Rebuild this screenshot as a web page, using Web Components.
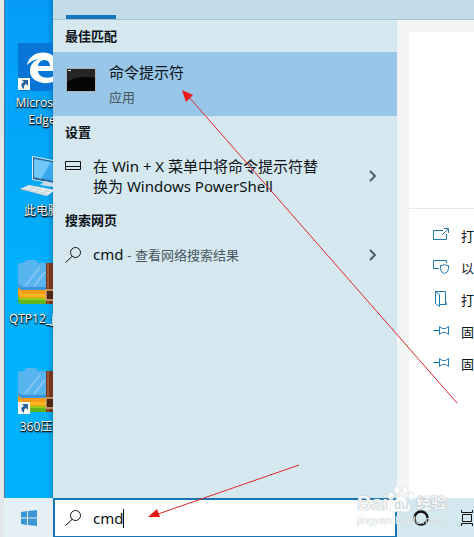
<!DOCTYPE html>
<html lang="zh-CN">
<head>
    <meta charset="UTF-8">
    <meta name="viewport" content="width=device-width, initial-scale=1">
    <title>cmd</title>
    <style>
        body {
            margin: 0;
            font-family: "Noto Sans", "Noto Sans CJK SC", sans-serif;
            font-size: 15px;
            color: #0b1116;
        }
    </style>
</head>
<body>

<!-- Whole screen: desktop on the left, search flyout, taskbar below -->
<template id="search-screen">
    <style>
        :host {
            display: grid;
            box-sizing: border-box;
            position: relative;
            height: 100vh;
            overflow: hidden;
            grid-template-columns: 49px minmax(0, 1fr);
            grid-template-rows: minmax(0, 1fr) 39px;
            border-left: 4px solid #e4e7ea;
            background: #d5e8f0;
        }

        .desktop {
            display: grid;
            grid-auto-rows: 108px;
            grid-template-columns: 74px;
            box-sizing: border-box;
            overflow: hidden;
            padding-top: 43px;
            background: linear-gradient(90deg, transparent 42px, #00558855), linear-gradient(#069cf8, #00b2fc 60%);
            border-left: 1px solid #56788c;
        }

        .flyout {
            display: grid;
            grid-template-columns: minmax(0, 1fr) 77px;
            grid-template-rows: 20px minmax(0, 1fr);
        }

        .tabs {
            grid-column: 1 / 3;
            display: flex;
            align-items: flex-end;
            padding-left: 13px;
            background: #c3dce9;
            border-bottom: 1px solid #a9c2cf;
        }

        .tabs span {
            width: 50px;
            height: 4px;
            background: #1577bd;
        }

        .results {
            background: #d5e8f0;
        }

        .details {
            overflow: hidden;
            display: flex;
            flex-direction: column;
            padding: 12px 0 0 12px;
            background: #f3f4f4;
        }

        .card {
            height: 176px;
            background: #fff;
            border-bottom: 1px solid #e9e9e9;
        }

        .actions {
            flex: 1;
            padding-top: 12px;
            background: #fff;
        }

        .taskbar {
            grid-column: 1 / 3;
        }

        .marks {
            position: absolute;
            left: -4px;
            top: 0;
            width: 474px;
            height: 537px;
            pointer-events: none;
        }

        baidu-mark {
            position: absolute;
            right: 23px;
            bottom: 10px;
        }
    </style>
    <div class="desktop"><slot name="desktop"></slot></div>
    <div class="flyout">
        <div class="tabs"><span></span></div>
        <div class="results"><slot></slot></div>
        <div class="details">
            <div class="card"></div>
            <div class="actions"><slot name="actions"></slot></div>
        </div>
    </div>
    <div class="taskbar"><slot name="taskbar"></slot></div>
    <baidu-mark></baidu-mark>
    <svg class="marks" viewBox="0 0 474 537" aria-hidden="true">
        <g stroke="#e0262c" fill="#ee1717">
            <path d="M457 403 188 96M299 465 158 514"/>
            <path stroke="none" d="M182 90l11 5-7 7zM148 517l9-8 3 8z"/>
        </g>
    </svg>
</template>

<template id="desktop-icon">
    <style>
        :host {
            display: block;
            text-align: center;
            font-family: "Open Sans", "Noto Sans CJK SC", sans-serif;
            font-size: 12px;
            line-height: 17px;
            color: #fff;
            text-shadow: 1px 1px 2px #000, 0 1px 1px #000;
        }

        svg {
            display: block;
            width: 48px;
            height: 48px;
            margin: 0 auto 3px;
        }
    </style>
    <svg viewBox="0 0 48 48" aria-hidden="true"></svg>
    <slot></slot>
</template>

<template id="result-group">
    <style>
        :host {
            display: block;
        }

        h2 {
            margin: 0;
            padding: 0 12px;
            font-size: 13px;
            line-height: 32px;
            font-weight: 700;
        }
    </style>
    <h2></h2>
    <slot></slot>
</template>

<template id="result-row">
    <style>
        :host {
            display: block;
        }

        button {
            display: flex;
            width: 100%;
            box-sizing: border-box;
            align-items: center;
            gap: 12px;
            padding: 8px 16px 8px 12px;
            border: 0;
            background: none;
            color: inherit;
            font: inherit;
            line-height: 20px;
            text-align: left;
        }

        :host([selected]) button {
            height: 64px;
            padding: 8px 12px;
            line-height: 24px;
            background: #97c6e8;
        }

        svg {
            flex: none;
            width: 16px;
            height: 16px;
            fill: none;
            stroke: #111;
        }

        :host([icon="keys"]) .icon {
            align-self: flex-start;
        }

        :host([selected]) .icon {
            align-self: flex-start;
            width: 32px;
            height: 24px;
            margin-top: 8px;
        }

        .text {
            flex: 1;
        }

        .chevron {
            stroke: #4b5f69;
            stroke-width: 2;
        }

        :host([selected]) .chevron {
            display: none;
        }

        ::slotted(small) {
            font-size: 13px;
            color: #48565e;
        }
    </style>
    <button type="button">
        <svg class="icon" aria-hidden="true"></svg>
        <span class="text"><slot></slot></span>
        <svg class="chevron" viewBox="0 0 16 16" aria-hidden="true"><path d="M5 3l5 5-5 5"/></svg>
    </button>
</template>

<template id="app-action">
    <style>
        :host {
            display: block;
        }

        button {
            display: flex;
            align-items: center;
            gap: 12px;
            height: 32px;
            padding: 0 0 4px 24px;
            border: 0;
            background: none;
            color: inherit;
            font: inherit;
            font-size: 13px;
            white-space: nowrap;
        }

        svg {
            flex: none;
            width: 16px;
            height: 16px;
            fill: none;
            stroke: #2079b2;
        }
    </style>
    <button type="button">
        <svg viewBox="0 0 16 16" aria-hidden="true"></svg>
        <slot></slot>
    </button>
</template>

<template id="task-bar">
    <style>
        :host {
            display: grid;
            grid-template-columns: 49px minmax(0, 1fr) 77px;
            height: 39px;
            background: #d3e8ef;
        }

        button {
            display: grid;
            place-items: center;
            padding: 0;
            border: 0;
            background: none;
        }

        .start {
            background: #e5f0f6;
        }

        .search {
            display: flex;
            align-items: center;
            box-sizing: border-box;
            padding-left: 10px;
            border: 2px solid #1873b4;
            border-bottom-width: 1px;
            background: #fff;
        }

        .search svg {
            margin-right: 12px;
        }

        input {
            field-sizing: content;
            padding: 0;
            border: 0;
            outline: 0;
            background: none;
            color: inherit;
            font: inherit;
        }

        .caret {
            width: 1px;
            height: 19px;
            background: #000;
        }

        .tray {
            display: grid;
            grid-template-columns: 48px 44px;
            overflow: hidden;
        }

        svg {
            fill: none;
            stroke: #111;
        }
    </style>
    <button class="start" type="button" aria-label="开始">
        <svg width="16" height="16" viewBox="0 0 16 16">
            <path fill="#3c96d6" stroke="none" d="M0 2l6-1v6.500H0zM7 1l9-1v7.500H7zM0 8.500h6V15l-6-1zM7 8.500h9V16l-9-1z"/>
        </svg>
    </button>
    <label class="search">
        <svg width="16" height="16" viewBox="0 0 16 16" aria-hidden="true">
            <circle cx="10.500" cy="5.500" r="5"/><path d="M7 9.500L.5 15.500"/>
        </svg>
        <input type="text" value="cmd" aria-label="搜索">
        <span class="caret"></span>
    </label>
    <div class="tray">
        <button type="button" aria-label="Cortana">
            <svg width="16" height="16" viewBox="0 0 16 16"><circle cx="8" cy="8" r="6.500" stroke-width="2.500"/></svg>
        </button>
        <button type="button" aria-label="任务视图">
            <svg width="12" height="16" viewBox="0 0 12 16"><path d="M.5 0v2.500h11V0M1.500 4.500h9v7h-9zM.5 16v-2.500h11V16"/></svg>
        </button>
    </div>
</template>

<!-- Paw logo watermark -->
<template id="baidu-mark">
    <style>
        :host {
            display: block;
            width: 94px;
            color: #ffffffe6;
            font-family: "Liberation Sans", "Noto Sans CJK SC", sans-serif;
            text-shadow: 0 0 1px #9aa5ab, 0 0 1px #b5bfc5;
            pointer-events: none;
        }

        .name {
            display: flex;
            align-items: center;
            font-size: 20px;
            line-height: 18px;
            font-weight: 700;
        }

        .name b:last-child {
            font-size: 15px;
        }

        svg {
            width: 28px;
            height: 28px;
            margin: -8px 1px 0 -1px;
            fill: #fffffff0;
            stroke: #c5ced3;
            stroke-width: .5;
        }

        text {
            font-size: 12px;
            fill: #d3dde2;
            stroke: none;
            text-shadow: none;
        }

        .site {
            font-size: 11px;
            line-height: 14px;
            color: #ffffffb0;
            text-shadow: 0 0 1px #b5bfc5;
        }
    </style>
    <div class="name">
        <b>Bai</b>
        <svg viewBox="0 0 28 28">
            <ellipse cx="4" cy="11" rx="3" ry="4"/>
            <ellipse cx="10" cy="5" rx="3" ry="4"/>
            <ellipse cx="18" cy="5" rx="3" ry="4"/>
            <ellipse cx="24" cy="11" rx="3" ry="4"/>
            <path d="M14 11c4 0 6 5 8 8 3 4 1 8-3 8-3 0-7-1-10 0-5 1-8-3-4-8 3-3 5-8 9-8z"/>
            <text x="7" y="24">du</text>
        </svg>
        <b>经验</b>
    </div>
    <div class="site">jingyan.baidu.com</div>
</template>

<script>
    // Little arrow badge shared by the desktop shortcuts
    const shortcut = `<path fill="#fff" d="M0 35h12v12H0z"/>
        <path fill="#285f9f" d="M4 37h6v6l-2-2c-2 1-2 2-2 5-4-3-3-6 0-7z"/>`;

    const archive = `
        <path fill="#62b51f" d="M0 35h48v6q0 4-4 4H4q-4 0-4-4z"/>
        <path fill="#94ce17" d="M0 38h30v3H2z"/>
        <path fill="#f59b13" d="M0 27h48v12H4q-4 0-4-4z"/>
        <path fill="#ffb820" d="M0 32l5 3h25v3H4z"/>
        <path fill="#58b4ef" d="M0 6q0-2 2-2h4l2-3h10l2 3h28v24q0 3-4 3H4q-4-1-4-5z"/>
        <path fill="#3b96df" d="M0 25l4 3h42v3H4q-4-1-4-5z"/>
        <path stroke="#83c6f3" stroke-width="2" d="M22 8L7 27M27 13L16 27"/>
        <path fill="#71351e" d="M28 4h12v41H28z"/>
        <path fill="#9c5530" d="M29 4h2v41h-2z"/>
        <path fill="#4e2517" stroke="#d9aa73" stroke-width="1.500" d="M28 31h10v10H28z"/>`;

    const desktopIcons = {
        edge: `<path fill="#0876d7" d="M0 0h48v48H0z"/>
            <path fill="#fff" d="M9 22C12 5 40 5 40 24v4H20c1 8 11 8 18 4v6c-11 5-26 1-26-10 0-6 3-9 8-12-5 1-8 3-11 6zm11 1h12c0-8-11-8-12 0z"/>` + shortcut,
        pc: `<path fill="#24679d" stroke="#d8edf7" d="M14.500 5.500l31 6v23l-31-6z"/>
            <path fill="#39a6ee" d="M16 8l28 5v19l-28-6z"/>
            <path fill="#70c8f8" d="M16 8l17 3-10 17-7-2z"/>
            <path fill="#c7dbe5" d="M27 30l8 2v4l-13-2z"/>
            <path fill="#e9f1f4" stroke="#8caabd" stroke-width=".5" d="M11 34l26 5-8 6-27-7z"/>
            <path stroke="#a2b8c5" stroke-width=".5" d="M9 36l24 5M6 38l24 5M17 35l-7 5M24 36l-7 6M31 38l-8 6"/>`,
        zip: archive,
        zipLink: archive + shortcut
    };

    const rowIcons = {
        cmd: `<path fill="#050505" stroke="#a8b5bc" d="M1.500 .500h29v23h-29z"/>
            <path fill="#252525" stroke="none" d="M2 14C10 9 20 8 30 10V1H2z"/>
            <path stroke="#eee" d="M3 2.500h3"/>`,
        keys: `<path d="M.5 5.500h15v8H.5zM0 10.500h16"/>`,
        find: `<circle cx="10.500" cy="5.500" r="5"/><path d="M7 9.500L.5 15.500"/>`
    };

    const actionIcons = {
        open: `<path d="M10 3.500H.5v9h13V7M9 8l6-6M11 1.500h4.500V6"/>`,
        admin: `<path d="M6 9.500H.5v-8h13V4M7.500 6.500q3 0 4-1 1 1 4 1v3q0 4-4 5-4-1-4-5z"/>`,
        folder: `<path d="M2.500 .500h10v13H7M2.500 .500l4 3v12l-4-3zM12.500 10l1 3.500h-2"/>`,
        pin: `<path d="M0 7.500h6M6.500 3.500v8M6.500 4l3 1.500h3l3-2v8l-3-2h-3l-3 1.500"/>`
    };

    // Base class: clones the template that has the same id as the tag
    class TemplateElement extends HTMLElement {
        constructor() {
            super();
            const template = document.getElementById(this.localName);
            this.attachShadow({ mode: "open" }).appendChild(
                template.content.cloneNode(true)
            );
        }
    }

    class SearchScreen extends TemplateElement {}
    class TaskBar extends TemplateElement {}
    class BaiduMark extends TemplateElement {}

    class DesktopIcon extends TemplateElement {
        connectedCallback() {
            this.shadowRoot.querySelector("svg").innerHTML = desktopIcons[this.getAttribute("icon")];
        }
    }

    class ResultGroup extends TemplateElement {
        connectedCallback() {
            this.shadowRoot.querySelector("h2").textContent = this.getAttribute("heading");
        }
    }

    class ResultRow extends TemplateElement {
        connectedCallback() {
            const icon = this.shadowRoot.querySelector(".icon");
            icon.setAttribute("viewBox", this.hasAttribute("selected") ? "0 0 32 24" : "0 0 16 16");
            icon.innerHTML = rowIcons[this.getAttribute("icon")];
        }
    }

    class AppAction extends TemplateElement {
        connectedCallback() {
            this.shadowRoot.querySelector("svg").innerHTML = actionIcons[this.getAttribute("icon")];
        }
    }

    customElements.define("baidu-mark", BaiduMark);
    customElements.define("task-bar", TaskBar);
    customElements.define("desktop-icon", DesktopIcon);
    customElements.define("result-group", ResultGroup);
    customElements.define("result-row", ResultRow);
    customElements.define("app-action", AppAction);
    customElements.define("search-screen", SearchScreen);
</script>

<search-screen>
    <desktop-icon slot="desktop" icon="edge">Microsoft Edge</desktop-icon>
    <desktop-icon slot="desktop" icon="pc">此电脑</desktop-icon>
    <desktop-icon slot="desktop" icon="zip">QTP12_jb51</desktop-icon>
    <desktop-icon slot="desktop" icon="zipLink">360压缩</desktop-icon>

    <result-group heading="最佳匹配">
        <result-row icon="cmd" selected>命令提示符<br><small>应用</small></result-row>
    </result-group>
    <result-group heading="设置">
        <result-row icon="keys">在 Win + X 菜单中将命令提示符替<br>换为 Windows PowerShell</result-row>
    </result-group>
    <result-group heading="搜索网页">
        <result-row icon="find">cmd <small>- 查看网络搜索结果</small></result-row>
    </result-group>

    <app-action slot="actions" icon="open">打</app-action>
    <app-action slot="actions" icon="admin">以</app-action>
    <app-action slot="actions" icon="folder">打</app-action>
    <app-action slot="actions" icon="pin">固</app-action>
    <app-action slot="actions" icon="pin">固</app-action>

    <task-bar slot="taskbar"></task-bar>
</search-screen>

</body>
</html>
